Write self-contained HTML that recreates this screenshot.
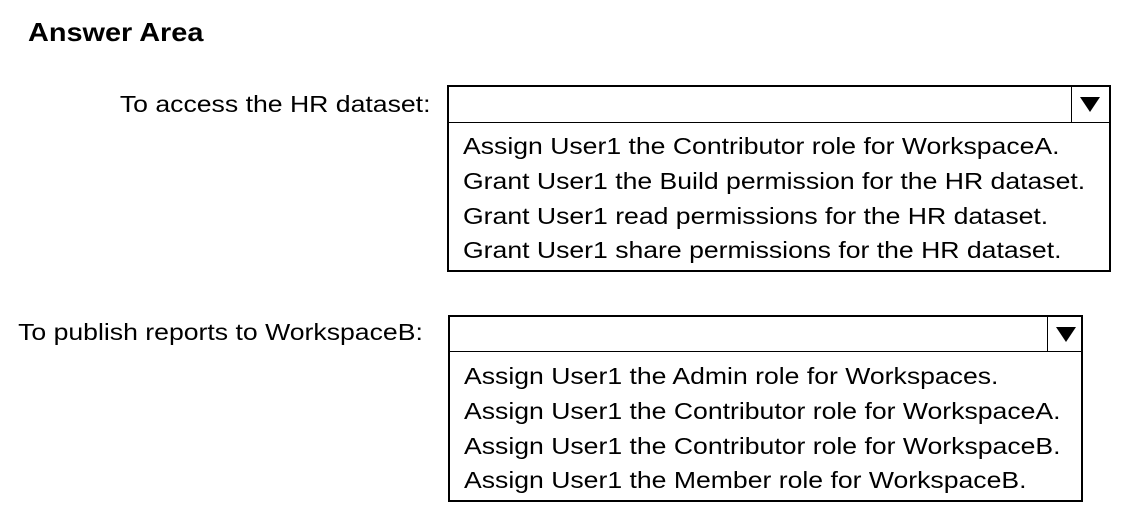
<!DOCTYPE html>
<html><head><meta charset="utf-8"><style>
body{margin:0;width:1131px;height:521px;background:#fff;position:relative;font-family:"Liberation Sans",Arial,sans-serif;color:#000;overflow:hidden}
.t{position:absolute;white-space:nowrap}
.box{position:absolute;border:2px solid #000;box-sizing:border-box}
.hd{position:absolute;left:0;right:0;top:0;border-bottom:1px solid #000}
.ar{position:absolute;top:0;right:0;bottom:0;border-left:1px solid #000}
.ar:after{content:"";position:absolute;left:8px;top:10px;border-left:10px solid transparent;border-right:10px solid transparent;border-top:15px solid #000}
.ln{position:absolute;left:14px;font-size:23px;line-height:24px;white-space:nowrap;transform:scaleX(1.156);transform-origin:0 0}
.r{transform:scaleX(1.157);transform-origin:100% 0}
</style></head><body>
<div class="t" style="left:28px;top:17px;font-size:26px;font-weight:bold;transform:scaleX(1.11);transform-origin:0 0">Answer Area</div>
<div class="t r" style="right:701px;top:91px;font-size:23px">To access the HR dataset:</div>
<div class="box" style="left:447px;top:85px;width:664px;height:187px">
 <div class="hd" style="height:35px"><div class="ar" style="width:37px"></div></div>
 <div class="ln" style="top:47px">Assign User1 the Contributor role for WorkspaceA.</div>
 <div class="ln" style="top:82px">Grant User1 the Build permission for the HR dataset.</div>
 <div class="ln" style="top:117px">Grant User1 read permissions for the HR dataset.</div>
 <div class="ln" style="top:151px">Grant User1 share permissions for the HR dataset.</div>
</div>
<div class="t r" style="right:708px;top:319px;font-size:23px">To publish reports to WorkspaceB:</div>
<div class="box" style="left:448px;top:315px;width:635px;height:187px">
 <div class="hd" style="height:34px"><div class="ar" style="width:33px"></div></div>
 <div class="ln" style="top:47px">Assign User1 the Admin role for Workspaces.</div>
 <div class="ln" style="top:82px">Assign User1 the Contributor role for WorkspaceA.</div>
 <div class="ln" style="top:117px">Assign User1 the Contributor role for WorkspaceB.</div>
 <div class="ln" style="top:151px">Assign User1 the Member role for WorkspaceB.</div>
</div>
</body></html>
